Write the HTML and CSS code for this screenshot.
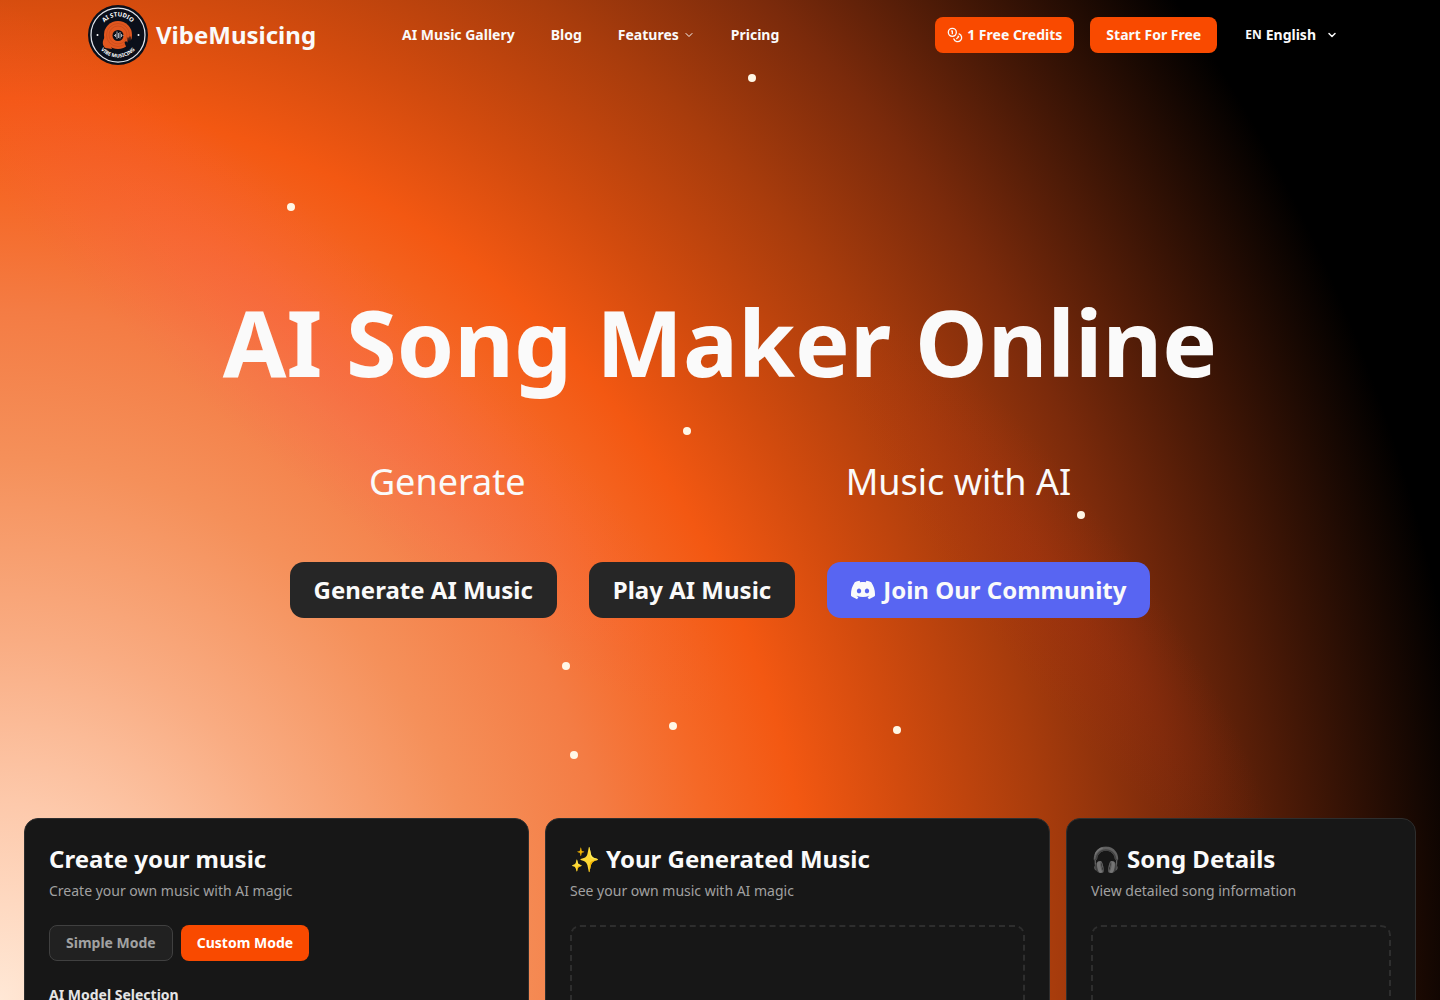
FILE: index.html
```
<!DOCTYPE html>
<html lang="en">
<head>
<meta charset="UTF-8">
<meta name="viewport" content="width=device-width, initial-scale=1.0">
<title>AI Song Maker Online - VibeMusicing</title>
<link rel="stylesheet" href="styles.css">
</head>
<body>

<div class="glow glow-pink" aria-hidden="true"></div>
<div class="glow glow-red" aria-hidden="true"></div>
<div class="stars" aria-hidden="true">
    <span class="star star-1"></span>
    <span class="star star-2"></span>
    <span class="star star-3"></span>
    <span class="star star-4"></span>
    <span class="star star-5"></span>
    <span class="star star-6"></span>
    <span class="star star-7"></span>
    <span class="star star-8"></span>
</div>

<header class="header">
    <a class="brand" href="#">
        <svg class="logo" viewBox="0 0 120 120" aria-hidden="true">
            <defs>
                <path id="arc-top" d="M23 60a37 37 0 0 1 74 0"/>
                <path id="arc-bottom" d="M15 60a45 45 0 0 0 90 0"/>
            </defs>
            <circle cx="60" cy="60" r="60" fill="#0b0f1a"/>
            <circle cx="60" cy="60" r="54" fill="none" stroke="#dfe3ea" stroke-width="2.5"/>
            <circle cx="60" cy="60" r="28" fill="#e2571f"/>
            <path d="M34 64c-6 8-6 17 1 22l13 2-3-8-5-6z" fill="#e2571f"/>
            <g fill="none" stroke="#b8431a" stroke-width="1">
                <circle cx="60" cy="60" r="23"/>
                <circle cx="60" cy="60" r="18"/>
            </g>
            <circle cx="60" cy="61" r="11" fill="#0b0f1a"/>
            <path d="M52 61h2M55 58v6M58 53v15M61 56v10M64 54v13M67 58v6M69 61h2" stroke="#dfe3ea" stroke-width="1.5"/>
            <path d="M73 75l3-3 3 3 0-10 2 0 1 8 1-10 2 0 1 10 3-7 2 1-2 12c1 6-2 9-4 12h-7c0-7-4-11-5-16z" fill="#0b0f1a"/>
            <circle cx="19" cy="60" r="2" fill="#fff"/>
            <circle cx="101" cy="60" r="2" fill="#fff"/>
            <text class="logo-text logo-text-top"><textPath href="#arc-top" startOffset="50%">AI STUDIO</textPath></text>
            <text class="logo-text"><textPath href="#arc-bottom" startOffset="50%">VIBE MUSICING</textPath></text>
        </svg>
        VibeMusicing
    </a>
    <nav class="nav">
        <a href="#">AI Music Gallery</a>
        <a href="#">Blog</a>
        <button class="nav-button" type="button">Features
            <svg class="icon chevron-small" viewBox="0 0 24 24"><path d="m6 9 6 6 6-6"/></svg>
        </button>
        <a href="#">Pricing</a>
    </nav>
    <div class="header-actions">
        <button class="button" type="button">
            <svg class="icon" viewBox="0 0 24 24"><circle cx="8" cy="8" r="6"/><path d="M18.09 10.37A6 6 0 1 1 10.34 18M7 6h1v4M16.71 13.88l.7.71-2.82 2.82"/></svg>
            1 Free Credits
        </button>
        <button class="button button-wide" type="button">Start For Free</button>
        <button class="language" type="button">
            <span class="code">EN</span>
            <span>English</span>
            <svg class="icon chevron" viewBox="0 0 24 24"><path d="m6 9 6 6 6-6"/></svg>
        </button>
    </div>
</header>

<main>
    <section class="hero">
        <h1>AI Song Maker Online</h1>
        <p class="tagline"><span>Generate</span><span>Music with AI</span></p>
        <div class="hero-actions">
            <a class="cta" href="#">Generate AI Music</a>
            <a class="cta" href="#">Play AI Music</a>
            <a class="cta discord" href="#">
                <svg class="discord-icon" viewBox="0 0 24 24"><path d="M20.317 4.3698a19.7913 19.7913 0 00-4.8851-1.5152.0741.0741 0 00-.0785.0371c-.211.3753-.4447.8648-.6083 1.2495-1.8447-.2762-3.68-.2762-5.4868 0-.1636-.3933-.4058-.8742-.6177-1.2495a.077.077 0 00-.0785-.037 19.7363 19.7363 0 00-4.8852 1.515.0699.0699 0 00-.0321.0277C.5334 9.0458-.319 13.5799.0992 18.0578a.0824.0824 0 00.0312.0561c2.0528 1.5076 4.0413 2.4228 5.9929 3.0294a.0777.0777 0 00.0842-.0276c.4616-.6304.8731-1.2952 1.226-1.9942a.076.076 0 00-.0416-.1057c-.6528-.2476-1.2743-.5495-1.8722-.8923a.077.077 0 01-.0076-.1277c.1258-.0943.2517-.1923.3718-.2914a.0743.0743 0 01.0776-.0105c3.9278 1.7933 8.18 1.7933 12.0614 0a.0739.0739 0 01.0785.0095c.1202.099.246.1981.3728.2924a.077.077 0 01-.0066.1276 12.2986 12.2986 0 01-1.873.8914.0766.0766 0 00-.0407.1067c.3604.698.7719 1.3628 1.225 1.9932a.076.076 0 00.0842.0286c1.961-.6067 3.9495-1.5219 6.0023-3.0294a.077.077 0 00.0313-.0552c.5004-5.177-.8382-9.6739-3.5485-13.6604a.061.061 0 00-.0312-.0286zM8.02 15.3312c-1.1825 0-2.1569-1.0857-2.1569-2.419 0-1.3332.9555-2.4189 2.157-2.4189 1.2108 0 2.1757 1.0952 2.1568 2.419 0 1.3332-.9555 2.4189-2.1569 2.4189zm7.9748 0c-1.1825 0-2.1569-1.0857-2.1569-2.419 0-1.3332.9554-2.4189 2.1569-2.4189 1.2108 0 2.1757 1.0952 2.1568 2.419 0 1.3332-.946 2.4189-2.1568 2.4189Z"/></svg>
                Join Our Community
            </a>
        </div>
    </section>

    <section class="studio">
        <div class="card">
            <h2>Create your music</h2>
            <p class="card-text">Create your own music with AI magic</p>
            <div class="modes">
                <button class="mode" type="button">Simple Mode</button>
                <button class="mode active" type="button">Custom Mode</button>
            </div>
            <h3>AI Model Selection</h3>
        </div>
        <div class="card">
            <h2>✨ Your Generated Music</h2>
            <p class="card-text">See your own music with AI magic</p>
            <div class="empty"></div>
        </div>
        <div class="card">
            <h2>🎧 Song Details</h2>
            <p class="card-text">View detailed song information</p>
            <div class="empty"></div>
        </div>
    </section>
</main>

</body>
</html>
```
FILE: styles.css
```
* {
    box-sizing: border-box;
}

body {
    margin: 0;
    font-family: "Noto Sans", "Noto Color Emoji", sans-serif;
    line-height: 20px;
    color: #fafafa;
    background: #000 radial-gradient(ellipse 103% 164% at 0 100%, #ffe8d6 0%, #fdc9ab 12%, #f9ac82 22%, #f5905a 33%, #f47c44 42%, #f56826 49%, #f35812 55%, #d24b0e 62%, #a83c0c 71%, #7a2a0b 80%, #431706 89%, #000 100%) fixed;
}

h1, h2, h3, p {
    margin: 0;
}

a {
    color: inherit;
    text-decoration: none;
}

button {
    font: inherit;
    color: inherit;
    border: none;
    background: none;
    padding: 0;
    cursor: pointer;
}

svg {
    flex-shrink: 0;
}

.header {
    display: flex;
    align-items: center;
    height: 70px;
    padding: 0 88px;
    font-size: 14px;
    font-weight: 700;
}

.brand {
    display: flex;
    align-items: center;
    gap: 8px;
    font-size: 24px;
}

.logo {
    width: 60px;
    height: 60px;
}

.logo-text {
    font-size: 10px;
    font-weight: 700;
    fill: #fff;
    text-anchor: middle;
}

.logo-text-top {
    font-size: 12px;
}

.nav {
    display: flex;
    align-items: center;
    gap: 36px;
    margin-left: 86px;
}

.nav-button {
    display: flex;
    align-items: center;
    gap: 4px;
}

.icon {
    width: 16px;
    height: 16px;
    fill: none;
    stroke: currentColor;
    stroke-width: 2;
    stroke-linecap: round;
    stroke-linejoin: round;
}

.chevron-small, .chevron {
    width: 12px;
    height: 12px;
}

.chevron {
    margin-left: 6px;
    stroke-width: 3;
}

.header-actions {
    display: flex;
    align-items: center;
    gap: 16px;
    margin-left: auto;
}

.button {
    display: flex;
    align-items: center;
    gap: 4px;
    height: 36px;
    padding: 0 12px;
    border-radius: 8px;
    background-color: #f94a00;
}

.button-wide {
    padding: 0 16px;
}

.language {
    display: flex;
    align-items: center;
    gap: 4px;
    height: 36px;
    padding: 0 14px 0 12px;
}

.code {
    font-size: 12px;
}

.hero {
    display: flex;
    flex-direction: column;
    align-items: center;
    padding: 224px 24px 200px;
}

h1 {
    font-size: 92px;
    line-height: 96px;
    font-weight: 700;
    text-align: center;
}

.tagline {
    display: flex;
    gap: 320px;
    margin-top: 72px;
    font-size: 36px;
    line-height: 40px;
}

.hero-actions {
    display: flex;
    gap: 32px;
    margin-top: 60px;
}

.cta {
    display: flex;
    align-items: center;
    gap: 8px;
    height: 56px;
    padding: 0 24px;
    border-radius: 14px;
    background-color: #262626;
    font-size: 24px;
    font-weight: 700;
}

.discord {
    background-color: #5865f2;
}

.discord-icon {
    width: 24px;
    height: 24px;
    fill: currentColor;
}

.studio {
    display: grid;
    grid-template-columns: 1fr 1fr 350px;
    gap: 16px;
    padding: 0 24px 24px;
}

.card {
    padding: 24px;
    border: 1px solid #2e2e2e;
    border-radius: 14px;
    background-color: #171717;
}

h2 {
    font-size: 24px;
    line-height: 32px;
    font-weight: 700;
}

.card-text {
    margin-top: 6px;
    font-size: 14px;
    color: #a1a1a1;
}

.modes {
    display: flex;
    gap: 8px;
    margin-top: 24px;
}

.mode {
    height: 36px;
    padding: 0 16px;
    border: 1px solid #404040;
    border-radius: 8px;
    background-color: #212121;
    color: #a1a1a1;
    font-size: 14px;
    font-weight: 700;
}

.mode.active {
    border: none;
    background-color: #f94a00;
    color: #fff;
}

h3 {
    margin-top: 24px;
    font-size: 14px;
    font-weight: 700;
    color: #e5e5e5;
}

.empty {
    height: 400px;
    margin-top: 24px;
    border: 2px dashed #2e2e2e;
    border-radius: 10px;
}

/* soft light bands behind the content */
.glow {
    position: absolute;
    z-index: -1;
}

.glow-pink {
    left: -260px;
    top: 230px;
    width: 1120px;
    height: 220px;
    background: radial-gradient(closest-side, rgba(255, 90, 90, 0.26), rgba(255, 90, 90, 0));
    transform: rotate(41deg);
}

.glow-red {
    left: 700px;
    top: 500px;
    width: 700px;
    height: 160px;
    background: radial-gradient(closest-side, rgba(190, 50, 20, 0.24), rgba(190, 50, 20, 0));
    transform: rotate(53deg);
}

.star {
    position: absolute;
    width: 8px;
    height: 8px;
    border-radius: 50%;
    background-color: #fff7e6;
}

.star-1 { left: 748px; top: 74px; }
.star-2 { left: 287px; top: 203px; }
.star-3 { left: 683px; top: 427px; }
.star-4 { left: 1077px; top: 511px; }
.star-5 { left: 562px; top: 662px; }
.star-6 { left: 669px; top: 722px; }
.star-7 { left: 893px; top: 726px; }
.star-8 { left: 570px; top: 751px; }
```
